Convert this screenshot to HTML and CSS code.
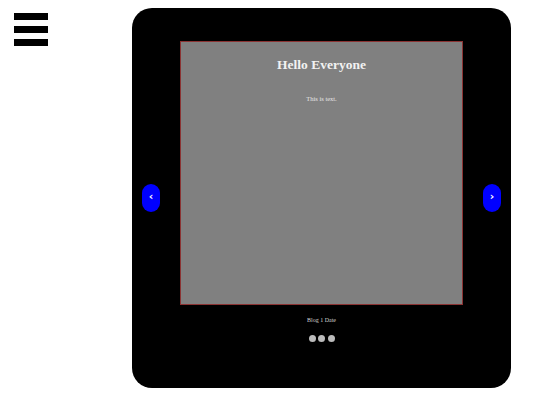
FILE: index.html
```html
<!DOCTYPE html>
<html>
<head>
<meta charset="utf-8">
<link rel="stylesheet" href="styles.css">
</head>
<body>
<div class="page">
  <div class="menu">
    <div class="bar"></div>
    <div class="bar"></div>
    <div class="bar"></div>
  </div>
  <div class="box">
    <div class="slide">
      <h2 class="title">Hello Everyone</h2>
      <p class="text">This is text.</p>
    </div>
    <div class="caption">Blog 1 Date</div>
    <div class="dots">
      <span class="dot"></span><span class="dot"></span><span class="dot"></span>
    </div>
    <a class="nav prev">&#8249;</a>
    <a class="nav next">&#8250;</a>
  </div>
</div>
</body>
</html>
```
FILE: styles.css
```css
html, body {
  margin: 0;
  padding: 0;
  background: #fff;
}
body {
  padding: 8px;
  font-family: "Liberation Serif", "Times New Roman", serif;
}
.page {
  display: flex;
  align-items: flex-start;
}
.menu {
  width: 118px;
  padding: 5px 0 0 6px;
  display: flex;
  flex-direction: column;
  gap: 6px;
}
.bar {
  width: 34px;
  height: 7px;
  background: #000;
}
.box {
  position: relative;
  width: 379px;
  height: 380px;
  background: #000;
  border-radius: 20px;
  box-sizing: border-box;
  padding-top: 33px;
  display: flex;
  flex-direction: column;
  align-items: center;
}
.slide {
  width: 283px;
  height: 264px;
  box-sizing: border-box;
  background: #808080;
  border: 1px solid #8b3333;
  text-align: center;
  color: #f2f2f2;
}
.title {
  margin: 15px 0 0;
  font-size: 13.5px;
  line-height: 16px;
  font-weight: bold;
}
.text {
  margin: 22px 0 0;
  font-size: 6.5px;
  line-height: 8px;
  color: #e6e6e6;
}
.caption {
  margin-top: 12px;
  font-size: 6px;
  line-height: 7px;
  color: #d0d0d0;
}
.dots {
  margin-top: 11px;
  display: flex;
  gap: 2.5px;
}
.dot {
  width: 7px;
  height: 7px;
  border-radius: 50%;
  background: #bbb;
}
.nav {
  position: absolute;
  top: 176px;
  width: 18px;
  height: 28px;
  border-radius: 9px;
  background: #0000ff;
  color: #fff;
  font-family: "DejaVu Sans", sans-serif;
  font-weight: bold;
  font-size: 11px;
  line-height: 26px;
  text-align: center;
}
.prev { left: 10px; }
.next { right: 10px; }
```
